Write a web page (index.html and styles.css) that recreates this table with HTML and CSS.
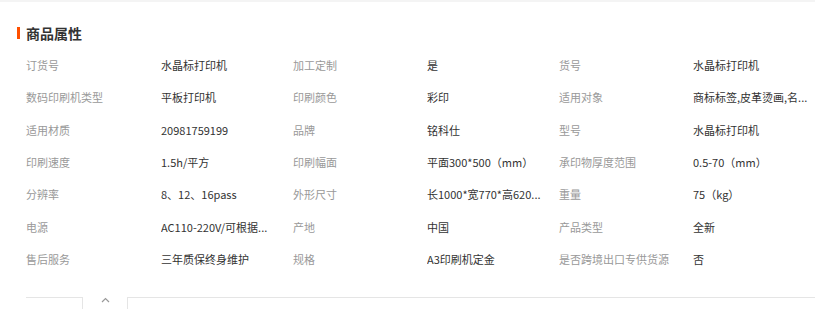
FILE: index.html
```html
<!DOCTYPE html>
<html lang="zh">
<head>
<meta charset="utf-8">
<link rel="stylesheet" href="styles.css">
</head>
<body>
<div class="topband"></div>
<section class="attrs">
  <h2 class="title">商品属性</h2>
  <div class="grid">
    <div class="k">订货号</div><div class="v">水晶标打印机</div>
    <div class="k">加工定制</div><div class="v">是</div>
    <div class="k">货号</div><div class="v">水晶标打印机</div>

    <div class="k">数码印刷机类型</div><div class="v">平板打印机</div>
    <div class="k">印刷颜色</div><div class="v">彩印</div>
    <div class="k">适用对象</div><div class="v">商标标签,皮革烫画,名...</div>

    <div class="k">适用材质</div><div class="v">20981759199</div>
    <div class="k">品牌</div><div class="v">铭科仕</div>
    <div class="k">型号</div><div class="v">水晶标打印机</div>

    <div class="k">印刷速度</div><div class="v">1.5h/平方</div>
    <div class="k">印刷幅面</div><div class="v">平面300*500（mm）</div>
    <div class="k">承印物厚度范围</div><div class="v">0.5-70（mm）</div>

    <div class="k">分辨率</div><div class="v">8、12、16pass</div>
    <div class="k">外形尺寸</div><div class="v">长1000*宽770*高620...</div>
    <div class="k">重量</div><div class="v">75（kg）</div>

    <div class="k">电源</div><div class="v">AC110-220V/可根据...</div>
    <div class="k">产地</div><div class="v">中国</div>
    <div class="k">产品类型</div><div class="v">全新</div>

    <div class="k">售后服务</div><div class="v">三年质保终身维护</div>
    <div class="k">规格</div><div class="v">A3印刷机定金</div>
    <div class="k">是否跨境出口专供货源</div><div class="v">否</div>
  </div>
</section>
<div class="foldbar">
  <div class="fold-left"></div>
  <div class="fold-tab">
    <svg width="9" height="6" viewBox="0 0 9 6"><path d="M1 5 L4.5 1.5 L8 5" fill="none" stroke="#999" stroke-width="1.2"/></svg>
  </div>
  <div class="fold-right"></div>
</div>
</body>
</html>
```
FILE: styles.css
```css
html, body {
  margin: 0;
  padding: 0;
  background: #fff;
  font-family: "Noto Sans CJK SC", "Noto Sans", sans-serif;
  overflow: hidden;
}
.topband {
  height: 2px;
  background: #f4f4f4;
}
.attrs {
  padding: 21px 0 0 26px;
}
.title {
  position: relative;
  margin: 0;
  font-size: 14px;
  line-height: 20px;
  font-weight: bold;
  color: #333;
}
.title::before {
  content: "";
  position: absolute;
  left: -9px;
  top: 4px;
  width: 3px;
  height: 12px;
  background: #ff5000;
}
.grid {
  margin-top: 6px;
  display: grid;
  grid-template-columns: 135px 132px 134px 132px 134px 122px;
  grid-auto-rows: 32.33px;
  align-items: center;
  font-size: 11px;
  line-height: 16px;
}
.k {
  color: #999;
  white-space: nowrap;
}
.v {
  color: #333;
  white-space: nowrap;
  overflow: hidden;
}
.foldbar {
  margin-top: 22px;
  display: flex;
  height: 20px;
}
.fold-left {
  margin-left: 26px;
  width: 56px;
  border-top: 1px solid #e5e5e5;
  border-right: 1px solid #e5e5e5;
}
.fold-tab {
  width: 44px;
  display: flex;
  justify-content: center;
  height: 6px;
}
.fold-tab svg {
  display: block;
}
.fold-right {
  flex: 1;
  border-top: 1px solid #e5e5e5;
  border-left: 1px solid #e5e5e5;
}
```
